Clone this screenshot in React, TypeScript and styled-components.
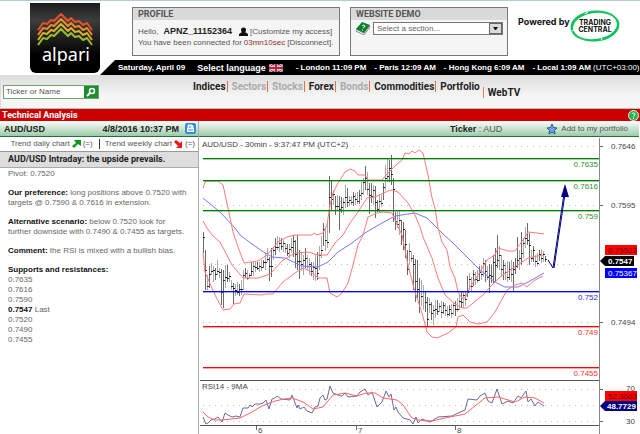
import React from "react";
import styled, { createGlobalStyle, css } from "styled-components";

const Global = createGlobalStyle`
  *, *::before, *::after { box-sizing: border-box; }
  body { margin: 0; background: #fff; }
  h1, h2, h3, p, ul, dl { margin: 0; padding: 0; }
  ul { list-style: none; }
  a { color: inherit; text-decoration: none; }
`;

const Page = styled.div`
  font: 8px/10px "Liberation Sans", Arial, sans-serif;
  color: #222;
  border-top: 1px solid #b9c7dc;
  overflow: hidden;
  min-height: 100vh;
  display: flex;
  flex-direction: column;
`;

/* ---------- header ---------- */
const Header = styled.header`
  display: flex;
  padding-left: 30px;
`;
const Logo = styled.a`
  flex: none;
  width: 70px;
  height: 70px;
  margin-top: 2px;
  border-radius: 0 0 6px 6px;
  background: linear-gradient(#1c1c1c, #3d3d3d 25%, #000 75%);
  svg { display: block; }
`;
const HeaderBody = styled.div`
  flex: 1;
  min-width: 0;
  display: flex;
  flex-direction: column;
`;
const TopRow = styled.div`
  display: flex;
  align-items: flex-start;
  padding: 6px 0 4px 32px;
`;
const Panel = styled.section<{ $size: number }>`
  flex: 0 0 ${(p) => p.$size}px;
  height: 49px;
  border: 1px solid #777;
  background: #f5f5f5;
  margin-right: 10px;
  color: #555;
  white-space: nowrap;
`;
const PanelTitle = styled.h2`
  font: bold 9px/12px Roboto, sans-serif;
  background: #dadada;
  color: #555;
  padding-left: 5px;
`;
const PanelText = styled.div`
  padding: 6px 5px;
  line-height: 11px;
  p { display: flex; align-items: center; gap: 2px; }
  b { color: #222; font-size: 9px; margin: 0 5px 0 3px; }
  em { font-style: normal; color: #8c2f2f; }
`;
const DemoForm = styled.div`
  display: flex;
  align-items: center;
  gap: 3px;
  padding: 1px 4px 0 5px;
`;
const SelectWrap = styled.span`
  flex: 1;
  display: flex;
  height: 13px;
  border: 1px solid #777;
  background: #fff;
`;
const Select = styled.select`
  appearance: none;
  flex: 1;
  min-width: 0;
  border: 0;
  padding: 0 3px;
  background: none;
  color: #666;
  font: 8px/11px "Liberation Sans", sans-serif;
`;
const Drop = styled.span`
  width: 13px;
  border: 1px solid #666;
  background: #dcdcdc;
  display: flex;
  align-items: center;
  justify-content: center;
`;
const Powered = styled.div`
  display: flex;
  align-items: center;
  color: #111;
  font: bold 9px/12px Inter, sans-serif;
  white-space: nowrap;
  margin-top: 2px;
  svg { flex: none; }
  span { padding-bottom: 8px; }
`;
const Clock = styled.div`
  display: flex;
  align-items: center;
  height: 15px;
  padding-left: 18px;
  background: #000;
  color: #fff;
  font-weight: bold;
  white-space: nowrap;
  clip-path: polygon(15px 0, 100% 0, 100% 100%, 0 100%);
`;
const Today = styled.span`
  flex: none;
`;
const Language = styled.button`
  display: flex;
  align-items: center;
  gap: 3px;
  margin: 0 13px 0 12px;
  padding: 0;
  border: 0;
  background: none;
  color: #fff;
  font: bold 9px/12px "Liberation Sans", sans-serif;
`;
const Zones = styled.div`
  display: flex;
  gap: 8px;
  small { font-size: 8px; font-weight: normal; }
`;

/* ---------- navigation ---------- */
const NavBar = styled.div`
  display: flex;
  align-items: flex-start;
  height: 34px;
  border-left: 1px solid #ddd;
  border-bottom: 1px solid #bbb;
  background: linear-gradient(#dcdcdc, #f4f4f4 60%, #f7f7f7);
`;
const Search = styled.form`
  display: flex;
  width: 96px;
  height: 14px;
  margin: 10px 90px 0 2px;
  border: 1px solid #6da56d;
  background: #fff;
`;
const SearchInput = styled.input`
  flex: 1;
  min-width: 0;
  border: 0;
  padding: 0 2px;
  background: none;
  font: 8px/12px "Liberation Sans", sans-serif;
  &::placeholder { color: #555; opacity: 1; }
`;
const SearchButton = styled.button`
  width: 14px;
  border: 0;
  padding: 0;
  background: #1b8f2d;
  display: flex;
  align-items: center;
  justify-content: center;
`;
const NavList = styled.ul`
  display: flex;
  align-items: flex-start;
  margin-top: 6px;
`;
const NavItem = styled.li<{ $muted?: boolean; $last?: boolean }>`
  font: bold 10px/11px Roboto, sans-serif;
  color: ${(p) => (p.$muted ? "#aaa" : "#222")};
  padding: 0 1px 0 4px;
  ${(p) =>
    p.$last
      ? css`margin: 6px 0 0 2px; border-left: 1px solid #e87b6b;`
      : css`border-right: 1px solid #e8703a;`}
  &:nth-last-child(2) { border-right: 0; }
`;

/* ---------- section bars ---------- */
const RedBar = styled.div`
  display: flex;
  justify-content: space-between;
  align-items: center;
  height: 12px;
  padding: 0 1px 0 2px;
  background: #c00;
  color: #fff;
  h1 { font: bold 9px/12px Roboto, sans-serif; }
`;
const IconButton = styled.button`
  display: flex;
  border: 0;
  padding: 0;
  background: none;
`;
const greenBar = css`
  display: flex;
  align-items: center;
  height: 16px;
  border-bottom: 1px solid #2f6b42;
  background: linear-gradient(#fbfdfb, #c4dfcb 60%, #9ccaa8);
  white-space: nowrap;
`;
const Main = styled.main`
  flex: 1;
  display: flex;
  align-items: stretch;
`;
const Side = styled.aside`
  flex: 0 0 199px;
  border-right: 1px solid #aaa;
`;
const SideBar = styled.div`
  ${greenBar}
  justify-content: space-between;
  padding: 0 2px 0 4px;
  color: #222;
  font: bold 9px/12px "Liberation Sans", sans-serif;
  span { flex: 1; text-align: right; padding-right: 6px; }
`;
const Trends = styled.div`
  display: flex;
  align-items: center;
  justify-content: flex-end;
  height: 15px;
  padding-right: 3px;
  color: #555;
  border-bottom: 1px solid #999;
  white-space: nowrap;
`;
const Trend = styled.a`
  display: flex;
  align-items: center;
  gap: 2px;
  & + & { border-left: 1px solid #333; margin-left: 6px; padding-left: 5px; }
`;
const Headline = styled.h2`
  font: bold 9px/15px Roboto, sans-serif;
  color: #222;
  background: #ddd;
  border-bottom: 1px solid #aaa;
  padding-left: 8px;
`;
const Analysis = styled.div`
  padding: 1px 8px;
  color: #666;
  display: flex;
  flex-direction: column;
  gap: 9px;
  b { color: #111; font-size: 8px; }
`;
const Content = styled.div`
  flex: 1;
  min-width: 0;
  padding-right: 1px;
`;
const ContentBar = styled.div`
  ${greenBar}
  justify-content: flex-end;
  gap: 44px;
  padding-right: 11px;
  color: #555;
  font-size: 9px;
  b { color: #222; }
`;
const Favorite = styled.button`
  display: flex;
  align-items: center;
  gap: 3px;
  border: 0;
  padding: 0;
  background: none;
  color: #555;
  font: 8px/10px "Liberation Sans", sans-serif;
`;
const ChartSvg = styled.svg`
  display: block;
  width: 100%;
  height: auto;
  font: 8px "Liberation Sans", sans-serif;
`;

/* ---------- chart data ---------- */
const bars: [number, number, number][] = [
  [203,232,253],[205,250,290],[207,275,290],[209,266,288],[211,263,275],[213,266,282],[215,268,280],[217,260,275],
  [219,268,278],[221,269,305],[223,270,308],[225,265,288],[227,265,282],[229,272,282],[231,280,290],[233,283,304],
  [235,284,296],[237,282,295],[239,284,296],[241,280,295],[243,270,290],[245,268,278],[247,270,280],[249,273,278],
  [251,262,276],[253,262,276],[255,262,272],[257,262,270],[259,262,272],[261,260,271],[263,260,268],[265,253,270],
  [267,248,262],[269,257,281],[271,248,277],[273,247,260],[275,238,255],[277,236,250],[279,237,252],[281,238,250],
  [283,240,252],[285,243,253],[287,244,256],[289,244,258],[291,238,253],[293,235,257],[295,240,268],[297,235,270],
  [299,250,279],[301,252,271],[303,255,275],[305,248,268],[307,255,270],[309,258,275],[311,262,276],[313,262,280],
  [315,255,281],[317,252,280],[319,246,270],[321,236,258],[323,223,246],[325,228,251],[327,222,248],[329,176,233],
  [331,180,210],[333,190,205],[335,196,215],[337,195,210],[339,196,230],[341,197,213],[343,198,215],[345,185,208],
  [347,188,207],[349,196,206],[351,196,205],[353,192,206],[355,193,205],[357,192,204],[359,190,204],[361,182,200],
  [363,178,195],[365,166,190],[367,172,195],[369,183,214],[371,183,203],[373,185,205],[375,186,218],[377,200,212],
  [379,195,212],[381,195,207],[383,183,200],[385,165,190],[387,158,182],[389,160,182],[391,155,185],[393,178,222],
  [395,212,230],[397,210,228],[399,211,235],[401,220,245],[403,222,250],[405,230,258],[407,250,275],[409,243,265],
  [411,252,262],[413,255,290],[415,259,302],[417,260,298],[419,278,313],[421,280,306],[423,285,310],[425,292,312],
  [427,297,326],[429,298,313],[431,302,320],[433,305,325],[435,300,318],[437,300,315],[439,303,312],[441,301,318],
  [443,302,314],[445,303,316],[447,306,317],[449,305,316],[451,304,318],[453,302,315],[455,301,316],[457,298,312],
  [459,295,310],[461,292,308],[463,291,308],[465,292,306],[467,276,297],[469,273,290],[471,277,292],[473,270,286],
  [475,272,285],[477,270,283],[479,266,281],[481,265,280],[483,258,277],[485,260,282],[487,266,280],[489,264,293],
  [491,265,283],[493,255,283],[495,248,282],[497,235,268],[499,246,270],[501,255,277],[503,260,280],[505,263,280],
  [507,261,282],[509,262,280],[511,260,282],[513,262,291],[515,258,274],[517,237,268],[519,250,270],[521,232,265],
  [523,238,258],[525,227,248],[527,223,245],[529,233,265],[531,250,262],[533,246,262],[535,255,267],[537,253,266],
  [539,250,261],[541,249,263],[543,251,262],[545,256,262],
];
const upper =
  "203,188 205,182 207,181 218,181 223,185 228,208 233,232 238,247 244,263 258,261 267,255 278,242 287,237 295,235 312,235 314,233 317,235 323,233 327,225 330,205 333,193 338,183 345,172 350,169 355,171 358,175 365,175 368,180 382,180 387,174 395,166 402,160 405,153 409,154 412,151 415,153 419,150 423,153 428,175 432,198 435,208 438,228 442,242 447,250 450,267 455,278 458,292 462,298 465,298 470,287 480,272 487,260 495,255 498,248 508,251 515,251 523,240 528,232 537,233 544,234";
const middle =
  "203,221 207,228 212,235 220,242 232,265 243,278 258,278 270,274 283,260 295,253 308,252 318,255 327,255 335,243 343,235 350,223 358,212 367,198 375,197 388,191 392,190 398,192 408,203 415,215 420,227 423,237 432,258 438,278 445,295 455,304 462,308 467,308 483,295 490,287 500,277 513,268 528,258 542,255 544,256";
const lower =
  "203,253 205,272 215,295 223,310 230,309 234,304 240,303 244,294 262,295 266,294 273,294 283,282 295,273 303,268 310,271 318,278 327,278 330,293 337,297 342,293 348,283 353,265 358,245 363,235 365,228 368,217 377,213 383,212 392,213 395,220 402,235 408,265 415,292 422,313 427,332 432,337 437,338 448,333 456,327 458,317 463,315 470,322 478,324 487,322 495,312 507,290 515,285 522,283 527,287 535,280 543,276";
const average =
  "203,198 220,212 235,228 240,235 252,244 262,251 272,257 285,258 302,266 318,267 328,262 338,252 352,243 365,233 382,223 395,216 408,214 415,213 427,218 442,233 453,243 465,255 480,270 495,282 505,287 518,287 530,281 544,273";
const rsi =
  "203,417 206,424 208,423 211,420 215,419 218,417 222,422 225,413 228,415 232,417 236,416 240,417 243,408 248,408 250,405 252,407 255,404 260,404 263,403 266,400 269,409 272,399 275,398 277,396 281,399 290,400 292,395 297,408 298,405 300,409 304,407 307,411 312,413 315,407 318,406 320,398 323,395 325,400 327,399 330,386 333,393 338,395 342,396 345,393 348,397 357,396 360,392 365,389 368,395 372,392 377,407 382,402 386,391 389,397 391,394 394,410 396,407 398,412 403,418 410,420 413,424 416,417 418,423 422,419 430,422 438,417 452,416 458,413 465,410 468,399 477,400 480,396 485,393 488,401 492,403 497,389 502,404 508,401 513,403 518,396 521,398 526,391 528,402 531,399 535,406 538,402 544,406";
const rsiAverage =
  "203,412 208,417 215,420 222,420 240,418 252,412 262,406 275,401 284,399 292,398 303,402 313,409 323,407 333,395 345,393 357,396 366,393 375,393 383,398 397,400 403,405 412,418 418,420 432,421 445,418 465,414 475,406 485,398 498,397 515,402 525,397 535,398 544,403";

const levels: [number, string, string][] = [
  [158, "0.7635", "#007a00"],
  [180, "0.7616", "#007a00"],
  [210, "0.759", "#007a00"],
  [291, "0.752", "#0000ff"],
  [326, "0.749", "#ff0000"],
  [367, "0.7455", "#ff0000"],
];

function Chart() {
  return (
    <ChartSvg viewBox="199 137 440 297" role="img" aria-label="AUD/USD 30 minute chart">
      <g stroke="#bbb" strokeDasharray="1 5" shapeRendering="crispEdges">
        {[146, 205, 264, 322, 389, 405, 421].map((y) => (
          <path key={y} d={`M203 ${y}.5H599`} />
        ))}
      </g>
      <g shapeRendering="crispEdges">
        {bars.map(([x, hi, lo], i) => {
          const open = Math.round(hi + ((lo - hi) * (((i * 7) % 5) + 2)) / 8);
          return (
            <g key={x}>
              <rect x={x} y={hi} width="1" height={lo - hi} fill={lo - hi > 26 || i % 3 === 0 ? "#6a6a6a" : "#aaa"} />
              <rect x={x} y={open} width="2" height="1" fill="#222" />
            </g>
          );
        })}
      </g>
      <g fill="none" strokeWidth="1">
        <polyline points={average} stroke="#7676ff" />
        <polyline points={upper} stroke="#ff7a7a" />
        <polyline points={middle} stroke="#ff7a7a" />
        <polyline points={lower} stroke="#ff7a7a" />
      </g>
      {levels.map(([y, label, color]) => (
        <g key={label} fill={color}>
          <rect x="203" y={y} width="396" height="1" />
          <rect x="203" y={y + 1} width="396" height="1" opacity="0.35" />
          <text x="598" y={y + 9} textAnchor="end" opacity="0.85">{label}</text>
        </g>
      ))}
      <text x="202" y="147" fill="#444">AUD/USD - 30min - 9:37:47 PM (UTC+2)</text>
      <path d="M548 260L553 268L558 234L564 194" fill="none" stroke="#000080" />
      <path d="M554 268L559 234L565 194" fill="none" stroke="#000080" />
      <path d="M565 184L569 197H561Z" fill="#000080" />
      <g shapeRendering="crispEdges">
        <rect x="200" y="380" width="399" height="1" fill="#555" />
        <rect x="200" y="425" width="399" height="1" fill="#555" />
        <rect x="599" y="138" width="1" height="296" fill="#888" />
        {[146, 205, 322, 389, 421].map((y) => (
          <rect key={y} x="600" y={y} width="3" height="1" fill="#666" />
        ))}
        {[256, 356, 455].map((x) => (
          <rect key={x} x={x} y="426" width="1" height="4" fill="#666" />
        ))}
      </g>
      <text x="202" y="389" fill="#444">RSI14 - 9MA</text>
      <polyline points={rsi} fill="none" stroke="#6a6a9c" />
      <polyline points={rsiAverage} fill="none" stroke="#ff6464" />
      <g fill="#444">
        <text x="611" y="149">0.7646</text>
        <text x="611" y="208">0.7595</text>
        <text x="611" y="325">0.7494</text>
        <text x="626" y="391">70</text>
        <text x="626" y="424">30</text>
        <text x="258" y="433">6</text>
        <text x="358" y="433">7</text>
        <text x="457" y="433">8</text>
      </g>
      <rect x="605" y="245" width="32" height="10" fill="#f00" />
      <text x="608" y="253" fill="#600">0.75523</text>
      <path d="M600 261L605 256H634V266H605Z" fill="#000" />
      <text x="608" y="264" fill="#fff" fontWeight="bold">0.7547</text>
      <rect x="605" y="268" width="32" height="10" fill="#00f" />
      <text x="608" y="276" fill="#fff">0.75367</text>
      <rect x="605" y="391" width="32" height="10" fill="#f00" />
      <text x="608" y="399" fill="#600">52.3663</text>
      <path d="M600 406L605 401H637V411H605Z" fill="#000080" />
      <text x="607" y="409" fill="#fff" fontWeight="bold">48.7729</text>
    </ChartSvg>
  );
}

/* ---------- icons ---------- */
const peaks = "M8 27L13 20L17 21L21 17L24 18L31 11L38 18L41 15L45 19L49 18L53 22L57 20L62 27";
const LogoArt = () => (
  <svg width="70" height="70" viewBox="0 0 70 70" aria-hidden="true">
    <g fill="none" strokeWidth="2" strokeLinejoin="round">
      <path d={peaks} stroke="#e8502a" />
      <path d={peaks} transform="translate(0 5)" stroke="#ee8a2c" />
      <path d={peaks} transform="translate(0 10)" stroke="#d9b02c" />
      <path d={peaks} transform="translate(0 15)" stroke="#97bd2e" />
    </g>
    <text x="36" y="58" textAnchor="middle" fill="#fff" fontFamily="'Noto Sans', sans-serif" fontSize="18">alpari</text>
  </svg>
);
const Person = () => (
  <svg width="9" height="9" viewBox="0 0 9 9" aria-hidden="true">
    <circle cx="4.500" cy="3" r="2.500" fill="#111" />
    <path d="M0 9V7L3 5H6L9 7V9Z" fill="#111" />
  </svg>
);
const Book = () => (
  <svg width="14" height="14" viewBox="0 0 14 14" aria-hidden="true">
    <path d="M0 8V10L8 14L14 6V4L8 12Z" fill="#fff" stroke="#888" />
    <path d="M0 8L6 1L14 4L8 12Z" fill="#0c8230" />
    <path d="M6 5Q8 3 9 5Q9 6 7 7M6 9H7" fill="none" stroke="#fff" />
  </svg>
);
const Flag = () => (
  <svg width="14" height="8" viewBox="0 0 14 8" aria-hidden="true">
    <rect width="14" height="8" fill="#24408e" />
    <path d="M0 0L14 8M14 0L0 8" stroke="#fff" strokeWidth="2" />
    <path d="M0 0L14 8M14 0L0 8" stroke="#c8283c" />
    <path d="M7 0V8M0 4H14" stroke="#fff" strokeWidth="3" />
    <path d="M7 0V8M0 4H14" stroke="#d0202e" strokeWidth="2" />
  </svg>
);
const TradingCentral = () => (
  <svg width="50" height="34" viewBox="0 0 50 34" role="img" aria-label="Trading Central">
    <ellipse cx="25" cy="17" rx="23" ry="14" fill="none" stroke="#10c45c" strokeWidth="3" transform="rotate(-5 25 17)" />
    <ellipse cx="25" cy="17" rx="22" ry="13" fill="#fff" transform="rotate(-8 25 17)" />
    <path d="M15 5L18 3M32 31L30 27M2 22L6 20M44 6L47 9" stroke="#fff" />
    <g fill="#111" textAnchor="middle" fontFamily="Inter, sans-serif" fontWeight="bold" fontSize="7">
      <text x="25" y="16">TRADING</text>
      <text x="25" y="23">CENTRAL</text>
    </g>
  </svg>
);
const Printer = () => (
  <svg width="11" height="11" viewBox="0 0 11 11" aria-hidden="true">
    <rect width="11" height="11" rx="2" fill="#2b8fdc" />
    <path d="M2 5H9V9H2Z" fill="#fff" />
    <path d="M3 2H7L8 3V6H3Z" fill="#e8f3fc" stroke="#fff" />
    <path d="M3 7H8M4 4H6" stroke="#2b8fdc" />
  </svg>
);
const Up = () => (
  <svg width="9" height="8" viewBox="0 0 9 8" aria-hidden="true">
    <path d="M2 0H9V6L6 4L2 8L0 6L4 3Z" fill="#0a9a1a" />
  </svg>
);
const Down = () => (
  <svg width="9" height="8" viewBox="0 0 9 8" aria-hidden="true">
    <path d="M0 2L2 0L6 3L8 1V8H2L4 6Z" fill="#f01818" />
  </svg>
);
const Star = () => (
  <svg width="12" height="12" viewBox="0 0 12 12" aria-hidden="true">
    <path d="M6 1L7.500 4.500L11 5L8.500 7.500L9 11L6 9.200L3 11L3.500 7.500L1 5L4.500 4.500Z" fill="#6ea3e2" stroke="#34558f" />
  </svg>
);
const Help = () => (
  <svg width="11" height="11" viewBox="0 0 11 11" aria-hidden="true">
    <circle cx="5.500" cy="5.500" r="5" fill="#2fae52" stroke="#e4f6e8" />
    <path d="M4 4Q4 3 5.500 3T7 4.500Q6 5 5.500 6.500M5.500 7.500V9" fill="none" stroke="#fff" />
  </svg>
);
const Magnifier = () => (
  <svg width="10" height="10" viewBox="0 0 10 10" aria-hidden="true">
    <circle cx="6" cy="4" r="2.500" fill="none" stroke="#fff" strokeWidth="1.500" />
    <path d="M4 6L1 9" stroke="#fff" strokeWidth="2" />
  </svg>
);

const nav: { label: string; muted?: boolean; last?: boolean }[] = [
  { label: "Indices" },
  { label: "Sectors", muted: true },
  { label: "Stocks", muted: true },
  { label: "Forex" },
  { label: "Bonds", muted: true },
  { label: "Commodities" },
  { label: "Portfolio" },
  { label: "WebTV", last: true },
];

export default function App() {
  return (
    <Page>
      <Global />
      <Header>
        <Logo href="#" aria-label="alpari"><LogoArt /></Logo>
        <HeaderBody>
          <TopRow>
            <Panel $size={208}>
              <PanelTitle>PROFILE</PanelTitle>
              <PanelText>
                <p>Hello, <b>APNZ_11152364</b> <Person /><a href="#">[Customize my access]</a></p>
                <p>You have been connected for <em>03mn10sec</em> <a href="#">[Disconnect].</a></p>
              </PanelText>
            </Panel>
            <Panel $size={158}>
              <PanelTitle>WEBSITE DEMO</PanelTitle>
              <DemoForm>
                <Book />
                <SelectWrap>
                  <Select aria-label="Website demo section"><option>Select a section...</option></Select>
                  <Drop><svg width="5" height="3" viewBox="0 0 5 3"><path d="M0 0H5L3 3H2Z" fill="#111" /></svg></Drop>
                </SelectWrap>
              </DemoForm>
            </Panel>
            <Powered><span>Powered by</span><TradingCentral /></Powered>
          </TopRow>
          <Clock>
            <Today>Saturday, April 09</Today>
            <Language type="button">Select language<Flag /></Language>
            <Zones>
              <span>- London 11:09 PM</span>
              <span>- Paris 12:09 AM</span>
              <span>- Hong Kong 6:09 AM</span>
              <span>- Local 1:09 AM <small>(UTC+03:00)</small></span>
            </Zones>
          </Clock>
        </HeaderBody>
      </Header>
      <NavBar>
        <Search>
          <SearchInput placeholder="Ticker or Name" aria-label="Ticker or Name" />
          <SearchButton type="button" aria-label="Search"><Magnifier /></SearchButton>
        </Search>
        <nav>
          <NavList>
            {nav.map((n) => (
              <NavItem key={n.label} $muted={n.muted} $last={n.last}><a href="#">{n.label}</a></NavItem>
            ))}
          </NavList>
        </nav>
      </NavBar>
      <RedBar>
        <h1>Technical Analysis</h1>
        <IconButton type="button" aria-label="Help"><Help /></IconButton>
      </RedBar>
      <Main>
        <Side>
          <SideBar>
            AUD/USD <span>4/8/2016 10:37 PM</span>
            <IconButton type="button" aria-label="Print"><Printer /></IconButton>
          </SideBar>
          <Trends>
            <Trend href="#">Trend daily chart <Up /> (=)</Trend>
            <Trend href="#">Trend weekly chart <Down /> (=)</Trend>
          </Trends>
          <Headline>AUD/USD Intraday: the upside prevails.</Headline>
          <Analysis>
            <p>Pivot: 0.7520</p>
            <p><b>Our preference:</b> long positions above 0.7520 with<br />targets @ 0.7590 &amp; 0.7616 in extension.</p>
            <p><b>Alternative scenario:</b> below 0.7520 look for<br />further downside with 0.7490 &amp; 0.7455 as targets.</p>
            <p><b>Comment:</b> the RSI is mixed with a bullish bias.</p>
            <div>
              <p><b>Supports and resistances:</b></p>
              <ul>
                <li>0.7635</li>
                <li>0.7616</li>
                <li>0.7590</li>
                <li><b>0.7547</b> Last</li>
                <li>0.7520</li>
                <li>0.7490</li>
                <li>0.7455</li>
              </ul>
            </div>
          </Analysis>
        </Side>
        <Content>
          <ContentBar>
            <span><b>Ticker</b> : AUD</span>
            <Favorite type="button"><Star />Add to my portfolio</Favorite>
          </ContentBar>
          <Chart />
        </Content>
      </Main>
    </Page>
  );
}
